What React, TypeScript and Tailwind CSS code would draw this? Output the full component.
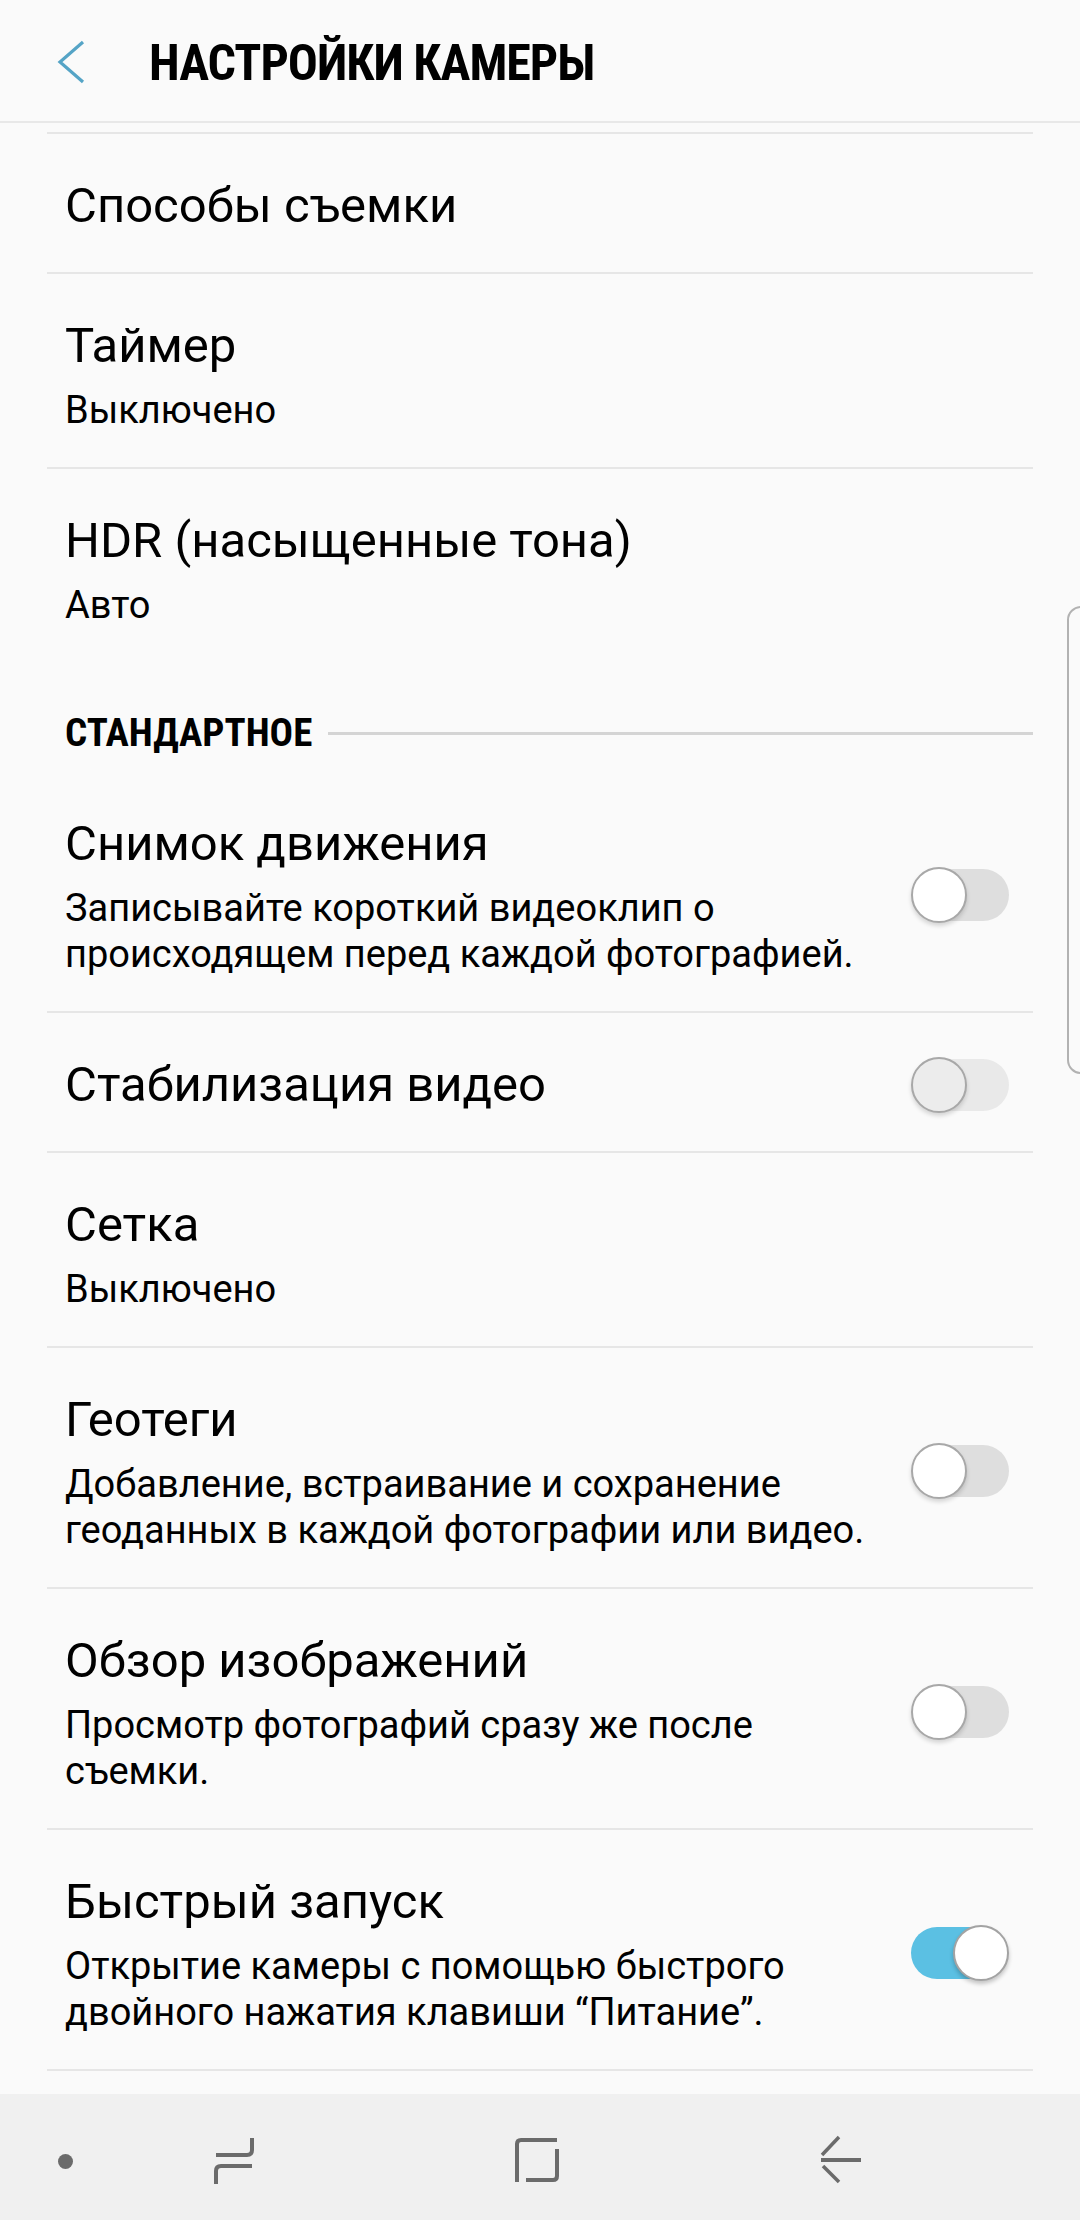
import React from 'react';

interface Row {
  title: string;
  sub?: string[];
  toggle?: 'off' | 'dim' | 'on';
  divider?: boolean;
}

const topRows: Row[] = [
  { title: 'Способы съемки', divider: true },
  { title: 'Таймер', sub: ['Выключено'], divider: true },
  { title: 'HDR (насыщенные тона)', sub: ['Авто'] },
];

const standardRows: Row[] = [
  {
    title: 'Снимок движения',
    sub: ['Записывайте короткий видеоклип о', 'происходящем перед каждой фотографией.'],
    toggle: 'off',
    divider: true,
  },
  { title: 'Стабилизация видео', toggle: 'dim', divider: true },
  { title: 'Сетка', sub: ['Выключено'], divider: true },
  {
    title: 'Геотеги',
    sub: ['Добавление, встраивание и сохранение', 'геоданных в каждой фотографии или видео.'],
    toggle: 'off',
    divider: true,
  },
  {
    title: 'Обзор изображений',
    sub: ['Просмотр фотографий сразу же после', 'съемки.'],
    toggle: 'off',
    divider: true,
  },
  {
    title: 'Быстрый запуск',
    sub: ['Открытие камеры с помощью быстрого', 'двойного нажатия клавиши “Питание”.'],
    toggle: 'on',
    divider: true,
  },
];

const Toggle = ({ state }: { state: 'off' | 'dim' | 'on' }) => {
  if (state === 'on') {
    return (
      <div className="relative w-[98px] h-[56px] shrink-0">
        <div className="absolute left-0 right-[14px] top-[2px] h-[52px] rounded-full bg-[#5bc0e3]" />
        <div className="absolute right-0 top-0 w-[56px] h-[56px] rounded-full bg-white border-2 border-[#a3a3a3] shadow-[0_3px_4px_rgba(0,0,0,0.22)]" />
      </div>
    );
  }
  const dim = state === 'dim';
  return (
    <div className="relative w-[98px] h-[56px] shrink-0">
      <div
        className={
          dim
            ? 'absolute left-[14px] right-0 top-[2px] h-[52px] rounded-full bg-[#e9e9e9]'
            : 'absolute left-[14px] right-0 top-[2px] h-[52px] rounded-full bg-[#dedede]'
        }
      />
      <div
        className={
          dim
            ? 'absolute left-0 top-0 w-[56px] h-[56px] rounded-full bg-[#ececec] border-2 border-[#a8a8a8] shadow-[0_3px_4px_rgba(0,0,0,0.15)]'
            : 'absolute left-0 top-0 w-[56px] h-[56px] rounded-full bg-white border-2 border-[#a8a8a8] shadow-[0_3px_4px_rgba(0,0,0,0.15)]'
        }
      />
    </div>
  );
};

const SettingRow = ({ row }: { row: Row }) => (
  <div>
    <div className="flex items-center pl-[65px] pr-[71px] pt-[40px] pb-[34px]">
      <div className="flex-1 min-w-0">
        <div className="text-[49px] leading-[64px] text-black">{row.title}</div>
        {row.sub && (
          <div className="mt-[9px] text-[38px] leading-[46px] text-black">
            {row.sub.map((s) => (
              <div key={s}>{s}</div>
            ))}
          </div>
        )}
      </div>
      {row.toggle && <Toggle state={row.toggle} />}
    </div>
    {row.divider && <div className="mx-[47px] h-[2px] bg-[#e6e6e6]" />}
  </div>
);

export default function App() {
  return (
    <div
      className="relative flex flex-col h-[2220px] w-[1080px] bg-[#fafafa] overflow-hidden"
      style={{ fontFamily: 'Roboto, "Noto Sans", sans-serif' }}
    >
      {/* шапка */}
      <div className="flex items-center h-[123px] border-b-2 border-[#e8e8e8] shrink-0">
        <svg width="30" height="44" viewBox="0 0 30 44" className="ml-[56px] mt-[2px]">
          <path d="M27 2 L4 22 L27 42" fill="none" stroke="#55a4c6" strokeWidth="3.2" />
        </svg>
        <div
          className="ml-[63px] mt-[5px] text-[50px] font-bold text-black tracking-[-1px] font-stretch-condensed"
          style={{ fontFamily: '"Roboto Condensed", Roboto, sans-serif' }}
        >
          НАСТРОЙКИ КАМЕРЫ
        </div>
      </div>

      <div className="flex-1 overflow-hidden">
        <div className="h-[9px]" />
        <div className="mx-[47px] h-[2px] bg-[#e6e6e6]" />
        {topRows.map((r) => (
          <SettingRow key={r.title} row={r} />
        ))}

        <div className="flex items-center pl-[65px] pr-[47px] pt-[51px] pb-[19px]">
          <div
            className="text-[39px] leading-[40px] font-bold text-black font-stretch-condensed"
            style={{ fontFamily: '"Roboto Condensed", Roboto, sans-serif' }}
          >
            СТАНДАРТНОЕ
          </div>
          <div className="flex-1 ml-[16px] h-[3px] bg-[#d4d4d4]" />
        </div>

        {standardRows.map((r) => (
          <SettingRow key={r.title} row={r} />
        ))}
      </div>

      {/* навигация */}
      <div className="flex items-center h-[126px] bg-[#f0f0f0] shrink-0 relative">
        <div className="absolute left-[58px] top-[60px] w-[15px] h-[15px] rounded-full bg-[#6b6b6b]" />
        <svg width="44" height="48" viewBox="0 0 44 48" className="absolute left-[212px] top-[42px]">
          <path d="M40 2 V14 Q40 19 35 19 H4" fill="none" stroke="#6b6b6b" strokeWidth="4" />
          <path d="M40 30 H9 Q4 30 4 35 V48" fill="none" stroke="#6b6b6b" strokeWidth="4" />
        </svg>
        <svg width="46" height="48" viewBox="0 0 46 48" className="absolute left-[514px] top-[43px]">
          <path d="M3 45 V7 Q3 3 7 3 H43" fill="none" stroke="#6b6b6b" strokeWidth="4" />
          <path d="M43 12 V39 Q43 43 39 43 H12" fill="none" stroke="#6b6b6b" strokeWidth="4" />
        </svg>
        <svg width="46" height="50" viewBox="0 0 46 50" className="absolute left-[817px] top-[41px]">
          <path d="M22 2 L5 20" fill="none" stroke="#6b6b6b" strokeWidth="3.5" />
          <path d="M4 25 H44" fill="none" stroke="#6b6b6b" strokeWidth="4" />
          <path d="M6 31 L22 47" fill="none" stroke="#6b6b6b" strokeWidth="3.5" />
        </svg>
      </div>

      {/* полоса прокрутки */}
      <div className="absolute left-[1067px] top-[606px] w-[20px] h-[468px] rounded-l-[14px] border-2 border-[#b2b2b2]" />
    </div>
  );
}
